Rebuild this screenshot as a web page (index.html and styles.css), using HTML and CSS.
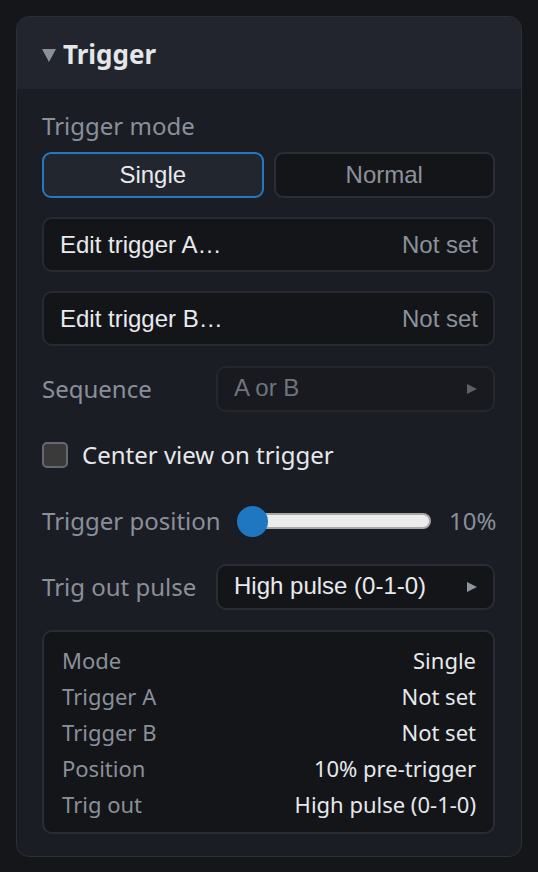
FILE: index.html
```html
<!DOCTYPE html>
<html lang="en">
<head>
<meta charset="utf-8">
<title>Trigger</title>
<link rel="stylesheet" href="styles.css">
</head>
<body>
<section class="panel">
  <header class="panel-head">
    <svg class="caret" width="14" height="13" viewBox="0 0 14 13"><polygon points="0,0 14,0 7,13" fill="#8a9099"/></svg>
    <h2 class="title">Trigger</h2>
  </header>
  <div class="panel-body">
    <div class="label mode-label">Trigger mode</div>
    <div class="seg">
      <button class="seg-btn active">Single</button>
      <button class="seg-btn">Normal</button>
    </div>
    <button class="edit-btn first"><span>Edit trigger A…</span><span class="muted">Not set</span></button>
    <button class="edit-btn"><span>Edit trigger B…</span><span class="muted">Not set</span></button>
    <div class="row seq-row">
      <div class="label row-label">Sequence</div>
      <div class="select disabled"><span>A or B</span><svg width="10" height="10" viewBox="0 0 10 10"><polygon points="0,0 10,5 0,10" fill="#5b6069"/></svg></div>
    </div>
    <label class="check-row">
      <span class="box"></span>
      <span class="check-text">Center view on trigger</span>
    </label>
    <div class="row slider-row">
      <div class="label row-label">Trigger position</div>
      <div class="slider" role="slider" aria-valuenow="10">
        <div class="track"></div>
        <div class="thumb"></div>
      </div>
      <div class="label value">10%</div>
    </div>
    <div class="row out-row">
      <div class="label row-label">Trig out pulse</div>
      <div class="select"><span>High pulse (0-1-0)</span><svg width="10" height="10" viewBox="0 0 10 10"><polygon points="0,0 10,5 0,10" fill="#9096a0"/></svg></div>
    </div>
    <div class="summary">
      <div class="sum-row"><span class="k">Mode</span><span class="v">Single</span></div>
      <div class="sum-row"><span class="k">Trigger A</span><span class="v">Not set</span></div>
      <div class="sum-row"><span class="k">Trigger B</span><span class="v">Not set</span></div>
      <div class="sum-row"><span class="k">Position</span><span class="v">10% pre-trigger</span></div>
      <div class="sum-row"><span class="k">Trig out</span><span class="v">High pulse (0-1-0)</span></div>
    </div>
  </div>
</section>
</body>
</html>
```
FILE: styles.css
```css
html, body {
  margin: 0;
  background: #15161a;
}
body {
  padding: 16px;
  font-family: "Noto Sans", "Open Sans", sans-serif;
  color: #e6e8eb;
}
.panel {
  width: 506px;
  box-sizing: border-box;
  border: 1px solid #2c2f37;
  border-radius: 13px;
  background: #1b1d24;
  overflow: hidden;
}
.panel-head {
  height: 72px;
  background: #22252d;
  display: flex;
  align-items: center;
  padding-left: 25px;
}
.caret {
  margin-top: 5px;
  margin-right: 7px;
}
.title {
  margin: 0;
  margin-top: 2px;
  font-size: 26px;
  font-weight: 700;
  color: #e4e6ea;
  line-height: 32px;
}
.panel-body {
  padding: 21px 26px 22px 25px;
  display: flex;
  flex-direction: column;
}
.label {
  font-size: 24px;
  line-height: 32px;
  color: #8a909a;
  white-space: nowrap;
}
.seg {
  margin-top: 10px;
  display: grid;
  grid-template-columns: 1fr 1fr;
  gap: 10px;
}
button {
  font-family: "Liberation Sans", Arial, sans-serif;
  font-size: 24px;
  margin: 0;
  box-sizing: border-box;
  cursor: pointer;
}
.seg-btn {
  height: 46px;
  border-radius: 9px;
  border: 2px solid #2b2e36;
  background: #141519;
  color: #8c929b;
}
.seg-btn.active {
  border-color: #2878c0;
  background: #22262f;
  color: #e8eaed;
}
.edit-btn {
  height: 55px;
  margin-top: 19px;
  border-radius: 10px;
  border: 2px solid #272a32;
  background: #141519;
  color: #e8eaed;
  display: flex;
  align-items: center;
  justify-content: space-between;
  padding: 0 15px 0 16px;
  text-align: left;
}
.muted {
  color: #8c929b;
}
.row {
  display: flex;
  align-items: center;
}
.row-label {
  width: 174px;
  flex: none;
}
.seq-row {
  margin-top: 20px;
}
.select {
  flex: 1;
  height: 46px;
  box-sizing: border-box;
  border: 2px solid #292c34;
  border-radius: 10px;
  background: #141519;
  display: flex;
  align-items: center;
  justify-content: space-between;
  padding: 0 16px 0 16px;
  font-family: "Liberation Sans", Arial, sans-serif;
  font-size: 24px;
  color: #e8eaed;
}
.select span {
  margin-top: -2px;
}
.select.disabled {
  background: #181a1f;
  border-color: #24272e;
  color: #6f747d;
}
.check-row {
  margin-top: 27px;
  display: flex;
  align-items: center;
  height: 32px;
}
.box {
  width: 26px;
  height: 26px;
  box-sizing: border-box;
  border: 2px solid #66686c;
  border-radius: 5px;
  background: #3a3a3b;
  margin-right: 14px;
}
.check-text {
  font-size: 24px;
  line-height: 32px;
  color: #e6e8eb;
}
.slider-row {
  margin-top: 34px;
}
.slider {
  position: relative;
  flex: 1;
  height: 31px;
  margin-left: 21px;
  display: flex;
  align-items: center;
}
.track {
  flex: 1;
  margin-left: 8px;
  height: 16px;
  box-sizing: border-box;
  border-radius: 8px;
  background: #ececec;
  border: 2px solid #a8a8a8;
  border-left: none;
}
.thumb {
  position: absolute;
  left: 0;
  top: 0;
  width: 31px;
  height: 31px;
  border-radius: 50%;
  background: #1f77c1;
}
.value {
  margin-left: 18px;
  width: 46px;
  text-align: right;
}
.out-row {
  margin-top: 27px;
}
.summary {
  margin-top: 20px;
  border: 2px solid #292c34;
  border-radius: 10px;
  background: #141519;
  padding: 10px 17px 10px 18px;
}
.sum-row {
  display: flex;
  justify-content: space-between;
  font-size: 22px;
  line-height: 36px;
}
.k {
  color: #8a909a;
}
.v {
  color: #e6e8eb;
}
```
